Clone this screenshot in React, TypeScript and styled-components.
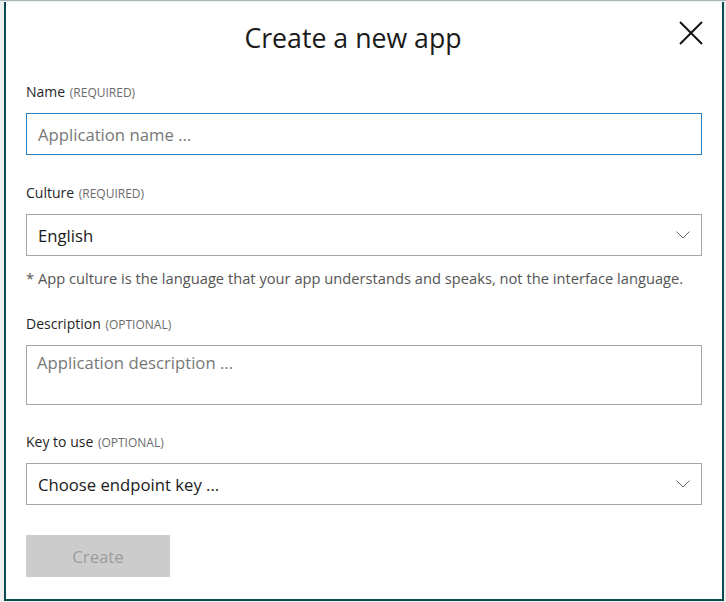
import React from 'react';
import styled, { createGlobalStyle } from 'styled-components';

const GlobalStyle = createGlobalStyle`
  html, body {
    margin: 0;
    padding: 0;
    height: 100%;
    background: #eef0f0;
    overflow: hidden;
  }
  body {
    font-family: "Segoe UI", "Open Sans", sans-serif;
    color: #1f1f1f;
  }
  * { box-sizing: border-box; }
`;

const Page = styled.div`
  height: 602px;
  padding: 1px 2px 2px 4px;
  border-top: 1px solid #a9b6b8;
  display: flex;
`;

const Dialog = styled.div`
  width: 720px;
  height: 599px;
  background: #fff;
  border: 2px solid #0b4b4f;
  border-top: none;
  padding: 18px 20px 0;
  display: flex;
  flex-direction: column;
  position: relative;
`;

const Header = styled.div`
  height: 62px;
  padding-right: 22px;
  display: flex;
  justify-content: center;
  align-items: flex-start;
`;

const Title = styled.h1`
  margin: 0;
  font-size: 26.7px;
  font-weight: 400;
  line-height: 36px;
  color: #1a1a1a;
`;

const CloseButton = styled.button`
  position: absolute;
  top: 19px;
  right: 19px;
  width: 24px;
  height: 24px;
  padding: 0;
  border: none;
  background: none;
  display: flex;
  align-items: center;
  justify-content: center;
`;

const Field = styled.div<{ $gap?: number }>`
  display: flex;
  flex-direction: column;
  margin-top: ${(p) => p.$gap ?? 0}px;
`;

const Label = styled.label`
  height: 20px;
  line-height: 20px;
  font-size: 14px;
  color: #1f1f1f;
  margin-bottom: 11px;
`;

const Hint = styled.span`
  font-size: 12px;
  color: #6b6b6b;
  margin-left: 1px;
`;

const TextInput = styled.div<{ $focused?: boolean }>`
  height: 42px;
  border: 1px solid ${(p) => (p.$focused ? '#2a7fc4' : '#a6a6a6')};
  padding: 0 11px;
  display: flex;
  align-items: center;
  font-size: 16.7px;
  color: #777;
`;

const TextArea = styled.div`
  height: 60px;
  border: 1px solid #a6a6a6;
  padding: 6px 10px;
  font-size: 16.7px;
  line-height: 22px;
  color: #777;
`;

const Select = styled.div`
  height: 42px;
  border: 1px solid #a6a6a6;
  padding: 0 11px;
  display: flex;
  align-items: center;
  justify-content: space-between;
  font-size: 16.7px;
  color: #1a1a1a;
`;

const HelpText = styled.p`
  margin: 12px 0 0;
  height: 20px;
  line-height: 20px;
  font-size: 14.7px;
  color: #555;
  white-space: nowrap;
`;

const CreateButton = styled.button`
  margin-top: 30px;
  width: 144px;
  height: 42px;
  border: none;
  background: #cccccc;
  color: #9c9c9c;
  font-family: inherit;
  font-size: 16.7px;
`;

const Chevron = () => (
  <svg width="14" height="8" viewBox="0 0 14 8">
    <polyline points="0.5,0.5 7,7 13.5,0.5" fill="none" stroke="#666" strokeWidth="1" />
  </svg>
);

const CloseIcon = () => (
  <svg width="24" height="24" viewBox="0 0 24 24">
    <line x1="1" y1="1" x2="23" y2="23" stroke="#111" strokeWidth="2" />
    <line x1="23" y1="1" x2="1" y2="23" stroke="#111" strokeWidth="2" />
  </svg>
);

const App: React.FC = () => {
  return (
    <Page>
      <GlobalStyle />
      <Dialog>
        <Header>
          <Title>Create a new app</Title>
        </Header>
        <CloseButton aria-label="Close">
          <CloseIcon />
        </CloseButton>

        <Field>
          <Label>
            Name <Hint>(REQUIRED)</Hint>
          </Label>
          <TextInput $focused>Application name ...</TextInput>
        </Field>

        <Field $gap={28}>
          <Label>
            Culture <Hint>(REQUIRED)</Hint>
          </Label>
          <Select>
            English
            <Chevron />
          </Select>
        </Field>
        <HelpText>
          * App culture is the language that your app understands and speaks, not the interface language.
        </HelpText>

        <Field $gap={26}>
          <Label>
            Description <Hint>(OPTIONAL)</Hint>
          </Label>
          <TextArea>Application description ...</TextArea>
        </Field>

        <Field $gap={27}>
          <Label>
            Key to use <Hint>(OPTIONAL)</Hint>
          </Label>
          <Select>
            Choose endpoint key ...
            <Chevron />
          </Select>
        </Field>

        <div>
          <CreateButton disabled>Create</CreateButton>
        </div>
      </Dialog>
    </Page>
  );
};

export default App;
